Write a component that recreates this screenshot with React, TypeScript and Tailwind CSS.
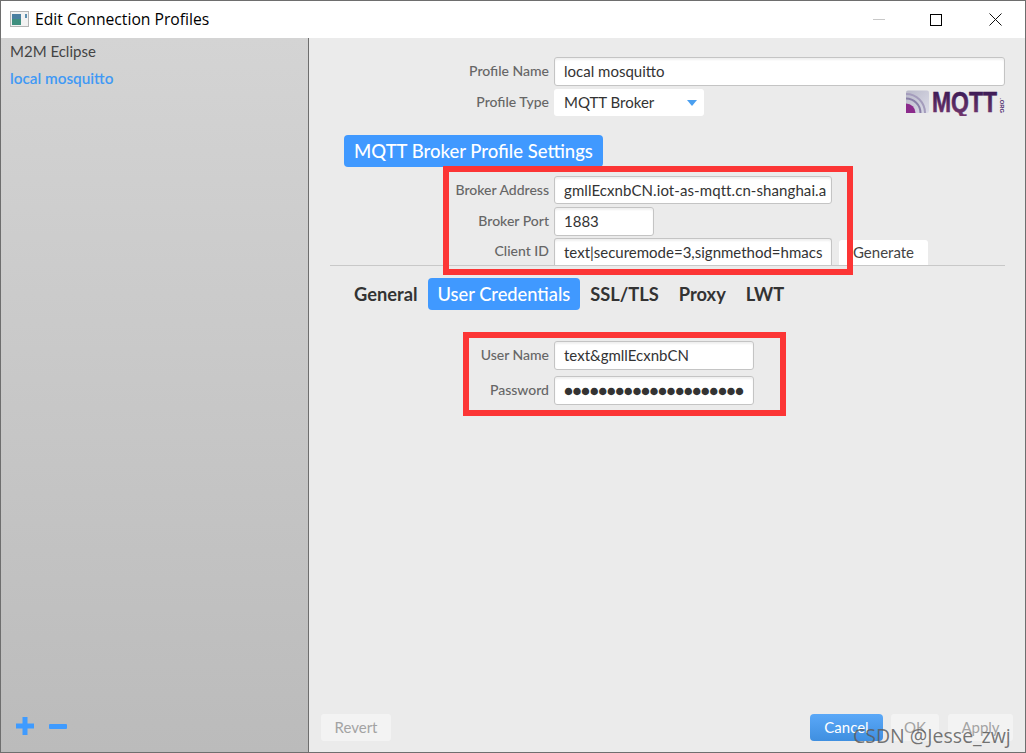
const lato = { fontFamily: 'Lato, "Open Sans", sans-serif' }

const FormRow = ({ label, className, children }: { label: string; className: string; children: React.ReactNode }) => (
    <div className={`flex items-center ${className}`}>
        <div className="w-[245px] pr-[5px] text-right text-[14px] font-medium text-[#666666] -translate-y-[1px]">{label}</div>
        {children}
    </div>
)

const TextBox = ({ value, className }: { value: string; className: string }) => (
    <div className={`flex items-center overflow-hidden whitespace-nowrap rounded-[3px] border border-[#c4c4c4] bg-white pl-[9px] text-[15px] text-[#333333] shadow-[inset_0_2px_2px_#f0f0f0] ${className}`}>
        {value}
    </div>
)

const tabs = ['General', 'User Credentials', 'SSL/TLS', 'Proxy', 'LWT']

const MqttLogo = () => (
    <svg width="99" height="26" viewBox="0 0 99 26" className="mt-[1px]">
        <defs>
            <linearGradient id="logoBg" x1="0" y1="0" x2="1" y2="1">
                <stop offset="0" stopColor="#b9b9c9" />
                <stop offset="1" stopColor="#dcdce8" />
            </linearGradient>
            <linearGradient id="logoText" x1="0" y1="0" x2="0" y2="1">
                <stop offset="0" stopColor="#2f1450" />
                <stop offset="1" stopColor="#74386f" />
            </linearGradient>
        </defs>
        <rect x="0" y="0.5" width="23" height="22.5" rx="2" fill="url(#logoBg)" />
        <path d="M0 13.5 A9.5 9.5 0 0 1 9.5 23 H0 Z" fill="#8b2a8b" />
        <path d="M0 8.5 A14.5 14.5 0 0 1 14.5 23" fill="none" stroke="#8a80a8" strokeWidth="2" />
        <path d="M0 4 A19 19 0 0 1 19 23" fill="none" stroke="#a49cbc" strokeWidth="2" />
        <text x="26" y="22" fontFamily="Liberation Sans" fontWeight="700" fontSize="30" textLength="65" lengthAdjust="spacingAndGlyphs" fill="url(#logoText)" stroke="url(#logoText)" strokeWidth="0.6">MQTT</text>
        <text x="0" y="0" transform="translate(94 8) rotate(90)" fontFamily="Liberation Sans" fontWeight="700" fontSize="6" textLength="15" lengthAdjust="spacingAndGlyphs" fill="#4b2a6b">.ORG</text>
    </svg>
)

const App = () => {
    return (
        <div className="relative flex h-[753px] w-[1026px] flex-col overflow-hidden border border-[#6e6e6e] bg-white" style={lato}>
            {/* title bar */}
            <div className="flex h-[37px] shrink-0 items-center bg-white pl-[9px]">
                <svg width="20" height="17" viewBox="0 0 20 17" className="mr-[5px]">
                    <rect x="0.5" y="0.5" width="18" height="15" fill="#f2f2f2" stroke="#b5b5b5" />
                    <rect x="2" y="3" width="9" height="11" fill="#3f8f7f" />
                    <rect x="2" y="3" width="9" height="5" fill="#4a7fa0" />
                    <rect x="15" y="3" width="2" height="4" fill="#5c8fb0" />
                </svg>
                <span className="text-[15.7px] text-black" style={{ fontFamily: '"Open Sans", sans-serif' }}>Edit Connection Profiles</span>
                <div className="ml-auto flex items-center">
                    <div className="mr-[45px] h-[1px] w-[12px] bg-[#c8c8c8]" />
                    <div className="mr-[47px] h-[12px] w-[12px] border border-black" />
                    <svg width="13" height="13" viewBox="0 0 13 13" className="mr-[23px]">
                        <path d="M0.5 0.5 L12.5 12.5 M12.5 0.5 L0.5 12.5" stroke="#111" strokeWidth="1" />
                    </svg>
                </div>
            </div>

            <div className="flex min-h-0 flex-1">
                {/* profile list */}
                <div className="flex w-[307px] shrink-0 flex-col bg-gradient-to-b from-[#d4d4d4] to-[#bbbbbb] pl-[9px]">
                    <div className="mt-[2px] text-[15px] text-[#444444]">M2M Eclipse</div>
                    <div className="mt-[4px] text-[15.3px] font-semibold text-[#4099f5]">local mosquitto</div>
                    <div className="mb-[17px] mt-auto flex items-center gap-[15px] pl-[6px]">
                        <svg width="18" height="18" viewBox="0 0 18 18">
                            <path d="M9 0 V18 M0 9 H18" stroke="#3f9bff" strokeWidth="5" />
                        </svg>
                        <div className="h-[5px] w-[18px] rounded-[1px] bg-[#3f9bff]" />
                    </div>
                </div>

                {/* settings */}
                <div className="flex min-w-0 flex-1 flex-col border-l border-[#6e6e6e] bg-[#ebebeb]">
                    <FormRow label="Profile Name" className="mt-[19px]">
                        <TextBox value="local mosquitto" className="h-[29px] w-[451px]" />
                    </FormRow>
                    <div className="mt-[3px] flex h-[27px] items-start justify-between pr-[20px]">
                        <FormRow label="Profile Type" className="">
                            <div className="flex h-[27px] w-[150px] items-center justify-between rounded-[3px] bg-white pl-[10px] pr-[7px] text-[15px] text-[#333333]">
                                MQTT Broker
                                <span className="h-0 w-0 border-x-[5px] border-t-[6px] border-x-transparent border-t-[#4a9ff0]" />
                            </div>
                        </FormRow>
                        <MqttLogo />
                    </div>

                    <div className="ml-[35px] mt-[19px] flex h-[32px] w-[259px] items-center justify-center rounded-[4px] bg-[#4099ff] pt-[1px] text-[18.5px] font-medium text-white">
                        MQTT Broker Profile Settings
                    </div>

                    <FormRow label="Broker Address" className="mt-[9px]">
                        <TextBox value="gmllEcxnbCN.iot-as-mqtt.cn-shanghai.a" className="h-[28px] w-[278px] tracking-[0.08px]" />
                    </FormRow>
                    <FormRow label="Broker Port" className="mt-[3px]">
                        <TextBox value="1883" className="h-[29px] w-[100px]" />
                    </FormRow>
                    <FormRow label="Client ID" className="mt-[2px]">
                        <TextBox value="text|securemode=3,signmethod=hmacs" className="h-[27px] w-[278px] rounded-b-none border-b-0" />
                        <div className="ml-[7px] flex h-[25px] w-[89px] items-center justify-center self-end rounded-t-[3px] bg-white text-[15px] text-[#444444]">
                            Generate
                        </div>
                    </FormRow>
                    <div className="ml-[21px] mr-[20px] h-[1px] bg-[#c8c8c8]" />

                    <div className="ml-[35px] mt-[12px] flex items-center">
                        {tabs.map((t, index) => (
                            <div
                                key={index}
                                className={`flex h-[32px] items-center justify-center rounded-[4px] px-[10px] pt-[1px] text-[18.3px] font-bold ${t === 'User Credentials' ? 'bg-[#4099ff] font-medium text-white' : 'text-[#333333]'}`}
                            >
                                {t}
                            </div>
                        ))}
                    </div>

                    <FormRow label="User Name" className="mt-[31px]">
                        <TextBox value="text&gmllEcxnbCN" className="h-[29px] w-[200px]" />
                    </FormRow>
                    <FormRow label="Password" className="mt-[6px]">
                        <TextBox value="●●●●●●●●●●●●●●●●●●●●●" className="h-[29px] w-[200px] tracking-[-0.45px]" />
                    </FormRow>

                    <div className="mb-[11px] ml-[12px] mr-[12px] mt-auto flex items-center text-[15px]">
                        <div className="flex h-[27px] w-[70px] items-center justify-center rounded-[3px] bg-[#f3f3f3] text-[#a3a3a3]">Revert</div>
                        <div className="ml-auto flex h-[27px] w-[73px] items-center justify-center rounded-[4px] bg-gradient-to-b from-[#5aa8f8] to-[#3f8fe0] text-white">Cancel</div>
                        <div className="ml-[8px] flex h-[27px] w-[48px] items-center justify-center rounded-[3px] bg-[#f3f3f3] text-[#a3a3a3]">OK</div>
                        <div className="ml-[9px] flex h-[27px] w-[65px] items-center justify-center rounded-[3px] bg-[#f3f3f3] text-[#a3a3a3]">Apply</div>
                    </div>
                </div>
            </div>

            {/* annotations drawn on top of the screenshot */}
            <div className="absolute left-[442px] top-[165px] h-[109px] w-[410px] border-[6px] border-[#fc3535]" />
            <div className="absolute left-[462px] top-[331px] h-[84px] w-[323px] border-[6px] border-[#fc3535]" />
            <div className="absolute left-[852px] top-[720px] text-[19.5px] text-[#5c5c5c]/85" style={{ fontFamily: '"Open Sans", sans-serif' }}>CSDN @Jesse_zwj</div>
        </div>
    )
}

export default App
